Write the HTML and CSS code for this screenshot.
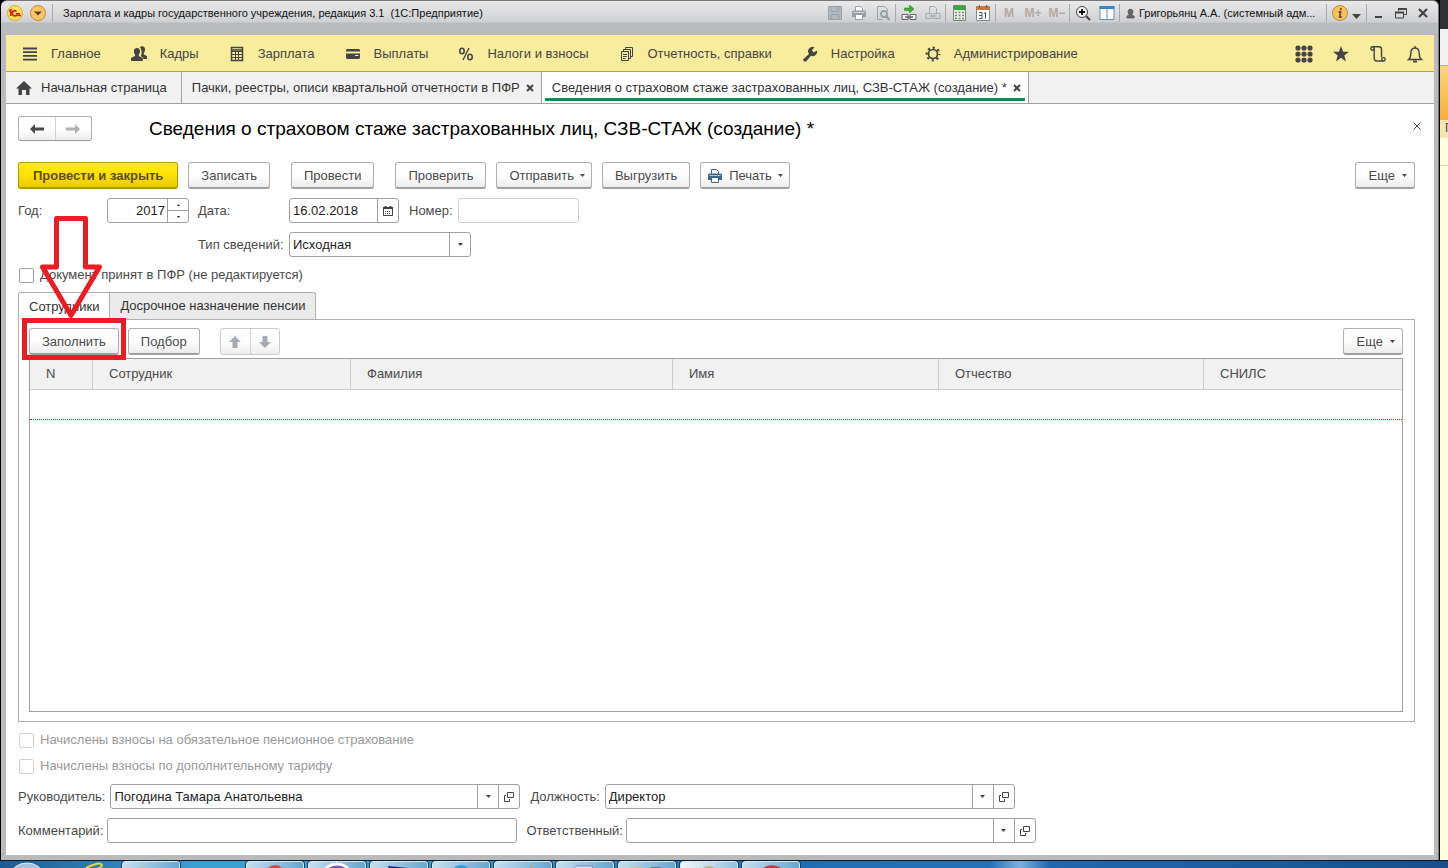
FILE: index.html
```html
<!DOCTYPE html>
<html lang="ru">
<head>
<meta charset="utf-8">
<title>Зарплата и кадры государственного учреждения, редакция 3.1</title>
<link rel="stylesheet" href="styles.css">
</head>
<body>
<svg class="defs" aria-hidden="true">
  <symbol id="i-print" viewBox="0 0 16 16"><path d="M4.500 6V1.500h5l2 2V6" fill="#fff" stroke="currentColor"/><path d="M2 5.500h12l1 1V12H1V6.500z" fill="currentColor"/><path d="M2.500 7.500h11" stroke="#fff" opacity=".6"/><path d="M4.500 9.500h7v5h-7z" fill="#fff" stroke="currentColor"/></symbol>
  <symbol id="i-down" viewBox="0 0 5 3"><path d="M0 0h5L2.500 3z" fill="currentColor"/></symbol>
  <symbol id="i-open" viewBox="0 0 10 10"><path d="M3.500.5h6v5h-6zM2 3.500H.5v6h5V7" fill="none" stroke="currentColor"/></symbol>
  <symbol id="i-arrow" viewBox="0 0 14 10"><path d="M0 5l5-5v3.500h9v3H5V10z" fill="currentColor"/></symbol>
  <symbol id="i-up" viewBox="0 0 12 12"><path d="M6 0l6 6H8.500v6h-5V6H0z" fill="currentColor"/></symbol>
</svg>
<div class="desktop">
<div class="window">
  <header class="titlebar">
    <div class="titlerow">
      <svg class="logo" viewBox="0 0 16 16"><circle cx="8" cy="8" r="7.500" fill="#ffe45c" stroke="#e0a92c"/><path d="M2 6.500l1.800-1.500v6M9.500 6.500a2.500 2.500 0 1 0-.5 4h5M9 8.700h4" fill="none" stroke="#d8201c" stroke-width="1.600"/></svg>
      <button class="round" aria-label="Меню"><svg viewBox="0 0 16 16"><circle cx="8" cy="8" r="7.500" fill="#fbc566" stroke="#c48a34"/><path d="M4 6.500h8L8 10.500z" fill="#5c4320"/></svg></button>
      <i class="sep"></i>
      <span class="apptitle">Зарплата и кадры государственного учреждения, редакция 3.1&nbsp; (1С:Предприятие)</span>
      <div class="tools">
        <button class="tool" aria-label="Сохранить"><svg viewBox="0 0 16 16" fill="none" stroke="#98a0a7"><path d="M1.500 1.500h13v13h-13z" fill="#b4bac0"/><path d="M4 2v4.500h8V2M4 14.500V9.500h8v5M10 3v2"/></svg></button>
        <button class="tool dim" aria-label="Печать"><svg><use href="#i-print"/></svg></button>
        <button class="tool" aria-label="Просмотр"><svg viewBox="0 0 16 16" fill="none" stroke="#98a0a7"><path d="M2.500 14.500v-13h7l3 3v2M2.500 14.500h5"/><circle cx="9" cy="9" r="3" stroke-width="2"/><path d="M11 11l3.500 4" stroke-width="2.500"/></svg></button>
        <i class="sep"></i>
        <button class="tool" aria-label="Ссылка"><svg viewBox="0 0 16 16" fill="none" stroke="#666"><path d="M1 9.500h6v5H1zM9 9.500h6v5H9z" fill="#eee"/><path d="M4 12h8" stroke-width="1.500"/><path d="M3.500 3h5V0L13 4 8.500 8V5.500h-5z" fill="#38b12d" stroke="#23871c" stroke-width=".5"/></svg></button>
        <button class="tool" aria-label="Печать ссылки"><svg viewBox="0 0 16 16" fill="none" stroke="#a4aab0"><path d="M4.500 8V1.500h5l2 2V8M1 8.500h6v5H1zM9 8.500h6v5H9zM4 11h8"/></svg></button>
        <i class="sep"></i>
        <button class="tool" aria-label="Калькулятор"><svg viewBox="0 0 16 16"><path d="M2.500.5h12v15h-12z" fill="#eef1ee" stroke="#7c857c"/><path d="M3 1h11v4H3z" fill="#35a83a"/><path d="M4 7.500h9M4 10.500h9M4 13.500h9" stroke="#6d8a70" stroke-width="1.500" stroke-dasharray="2 1.500"/></svg></button>
        <button class="tool" aria-label="Календарь"><svg viewBox="0 0 16 16"><path d="M1.500 1.500h13v14h-13z" fill="#fff" stroke="#858b92"/><path d="M1 1h14v4H1z" fill="#c87843"/><path d="M4.500 0v3M11.500 0v3" stroke="#875330"/><path d="M4 7.500h3v6M4 10.500h3M4 13.500h3M9 8.500l1.500-1v6" fill="none" stroke="#44556d"/></svg></button>
        <i class="sep"></i>
        <button class="tool mem">M</button><button class="tool mem">M+</button><button class="tool mem">M−</button>
        <i class="sep"></i>
        <button class="tool" aria-label="Масштаб"><svg viewBox="0 0 16 16" fill="none" stroke="#444"><circle cx="7" cy="7" r="5.500" fill="#f5f5f5"/><path d="M7 4v6M4 7h6" stroke="#111" stroke-width="1.800"/><path d="M11 11l4 4" stroke-width="2.200"/></svg></button>
        <button class="tool" aria-label="Панели"><svg viewBox="0 0 16 16"><path d="M1 1.500h14v13H1z" fill="#fff" stroke="#6f8ca8"/><path d="M.5 1h15v3H.5z" fill="#3b86c8"/><path d="M8 4v10" stroke="#6f8ca8"/></svg></button>
        <i class="sep"></i>
        <button class="user"><svg viewBox="0 0 10 12" fill="#6a6a6a" stroke="#444" stroke-width=".7"><path d="M1 11V9l2.500-2h3L9 9v2z"/><circle cx="5" cy="4" r="2.800"/></svg>Григорьянц А.А. (системный адм...</button>
        <i class="sep"></i>
        <button class="tool" aria-label="Справка"><svg viewBox="0 0 16 16"><circle cx="8" cy="8" r="7.500" fill="#f8c15c" stroke="#bd8b37"/><path d="M8.800 3v2.200M6.500 7h2l-.8 5h2" fill="none" stroke="#6c5330" stroke-width="1.800"/></svg></button>
        <svg class="caret" viewBox="0 0 9 5"><path d="M0 0h9L4.500 5z" fill="#444"/></svg>
        <i class="sep"></i>
        <button class="win" aria-label="Свернуть"><svg viewBox="0 0 12 12"><path d="M2 10h7" stroke="#444" stroke-width="2"/></svg></button>
        <button class="win" aria-label="Восстановить"><svg viewBox="0 0 12 12" fill="none" stroke="#444"><path d="M3.500 4V1.500h8v6H9"/><path d="M3 2h9M0 5.500h9" stroke-width="2"/><path d="M.5 5v6h8V5"/></svg></button>
        <button class="win" aria-label="Закрыть"><svg viewBox="0 0 12 12"><path d="M2 2l8 8M10 2l-8 8" stroke="#444" stroke-width="2.200"/></svg></button>
      </div>
    </div>
  </header>
  <nav class="menu">
    <a href="#"><svg viewBox="0 0 16 16" stroke="currentColor" stroke-width="1.800"><path d="M1 2.500h14M1 6.200h14M1 9.900h14M1 13.600h14"/></svg>Главное</a>
    <a href="#"><svg viewBox="0 0 16 16" fill="currentColor"><path d="M9 1a3 3 0 0 1 5 2.500c0 1.700-.5 2.500-1.200 3.300v1.400l3.200 2V13h-3.500C12 11 10.500 10.500 9.600 10c1.500-2 1.400-6-.6-8.500z"/><path d="M6 2c2 0 3 1.300 3 3.300 0 1.500-.5 2.500-1.200 3.200V10l4 2v3H0v-3l4-2V8.500C3.300 7.800 2.900 6.800 2.900 5.300 2.900 3.300 4 2 6 2z"/></svg>Кадры</a>
    <a href="#"><svg viewBox="0 0 16 16" fill="none" stroke="currentColor"><path d="M2.500 1.500h11v13h-11z" stroke-width="1.500"/><path d="M3 4h10" stroke-width="1.500"/><path d="M3 8.500h10M3 11.500h10M6.500 5v9M9.500 5v9M3 5.500h10"/></svg>Зарплата</a>
    <a href="#"><svg viewBox="0 0 16 16" fill="currentColor"><path d="M2 3h12l1 1v1.500H1V4zM1 7.500h14V12l-1 1H2l-1-1z"/><path d="M10 9.500h3.500" stroke="#faec9d"/></svg>Выплаты</a>
    <a href="#"><svg viewBox="0 0 16 16" fill="none" stroke="currentColor" stroke-width="1.600"><ellipse cx="4" cy="5" rx="2.200" ry="2.700"/><ellipse cx="12" cy="11" rx="2.200" ry="2.700"/><path d="M11 2L5 14" stroke-width="1.400"/></svg>Налоги и взносы</a>
    <a href="#"><svg viewBox="0 0 16 16" fill="none" stroke="currentColor"><path d="M2.500 5.500h7v9h-7zM4.500 5V3.500h7v9H10M6.500 3V1.500h7v9H12M4 8.500h4M4 10.500h4M4 12.500h2.500"/></svg>Отчетность, справки</a>
    <a href="#"><svg viewBox="0 0 16 16"><path d="M1 13.500L7 8a4.500 4.500 0 0 1 5.500-6.800L10 4l1.500 2.500 3.500-2A4.500 4.500 0 0 1 9 9.800L4 15.500H2z" fill="currentColor"/></svg>Настройка</a>
    <a href="#"><svg viewBox="0 0 16 16" fill="none" stroke="currentColor"><circle cx="8" cy="8" r="4.500" stroke-width="1.700"/><circle cx="8" cy="8" r="6.300" stroke-width="2.200" stroke-dasharray="2.200 2.748" stroke-dashoffset="1.100"/></svg>Администрирование</a>
    <div class="quick">
      <button aria-label="Разделы"><svg viewBox="0 0 18 18" fill="currentColor"><g id="dots"><circle cx="3" cy="3" r="2.600"/><circle cx="9" cy="3" r="2.600"/><circle cx="15" cy="3" r="2.600"/></g><use href="#dots" y="6"/><use href="#dots" y="12"/></svg></button>
      <button aria-label="Избранное"><svg viewBox="0 0 18 18"><path d="M9 1l2.100 5.800H17l-4.700 3.700L14 16.500l-5-3.700-5 3.700 1.700-6L1 6.800h5.900z" fill="currentColor"/></svg></button>
      <button aria-label="История"><svg viewBox="0 0 18 18" fill="none" stroke="currentColor" stroke-width="1.400"><circle cx="3.500" cy="3.500" r="1.700"/><path d="M3.500 1.800H10c1.700 0 2.500 1 2.500 2.500v8M5.200 3.500V13c0 2 1 3 2.500 3H14"/><circle cx="14.500" cy="14.300" r="1.700"/></svg></button>
      <button aria-label="Уведомления"><svg viewBox="0 0 18 18" fill="none" stroke="currentColor" stroke-width="1.400"><path d="M9 1v2M2.500 14.500c2-1.500 2.300-3 2.300-6C4.800 5 6.500 3 9 3s4.200 2 4.200 5.500c0 3 .3 4.500 2.300 6z"/><path d="M7 16.500h4" stroke-width="2"/></svg></button>
    </div>
  </nav>
  <div class="tabs">
    <a href="#" class="tab home"><svg viewBox="0 0 16 14"><path d="M8 0l8 7.500h-2.500V14H10V9H6v5H2.500V7.500H0z" fill="#444"/></svg>Начальная страница</a>
    <a href="#" class="tab">Пачки, реестры, описи квартальной отчетности в ПФР<svg class="x" viewBox="0 0 8 8"><path d="M1 1l6 6M7 1L1 7"/></svg></a>
    <a href="#" class="tab active">Сведения о страховом стаже застрахованных лиц, СЗВ-СТАЖ (создание) *<svg class="x" viewBox="0 0 8 8"><path d="M1 1l6 6M7 1L1 7"/></svg></a>
  </div>
  <main class="form">
    <div class="head">
      <div class="pair nav">
        <button aria-label="Назад"><svg><use href="#i-arrow"/></svg></button><button class="off" aria-label="Вперед"><svg class="flip"><use href="#i-arrow"/></svg></button>
      </div>
      <h1>Сведения о страховом стаже застрахованных лиц, СЗВ-СТАЖ (создание) *</h1>
      <button class="close" aria-label="Закрыть форму"><svg viewBox="0 0 8 8"><path d="M.5.5l7 7M7.500.5l-7 7" stroke="#444"/></svg></button>
    </div>
    <div class="bar commands">
      <button class="btn primary">Провести и закрыть</button>
      <button class="btn apart">Записать</button>
      <button class="btn apart">Провести</button>
      <button class="btn">Проверить</button>
      <button class="btn drop">Отправить<svg><use href="#i-down"/></svg></button>
      <button class="btn">Выгрузить</button>
      <button class="btn drop print"><svg class="pic"><use href="#i-print"/></svg>Печать<svg><use href="#i-down"/></svg></button>
      <button class="btn drop more">Еще<svg><use href="#i-down"/></svg></button>
    </div>
    <div class="fields">
      <label for="year" class="c1">Год:</label>
      <div class="field year"><input id="year" value="2017"><span class="spin"><button aria-label="Больше"><svg class="up"><use href="#i-down"/></svg></button><button aria-label="Меньше"><svg><use href="#i-down"/></svg></button></span></div>
      <label for="date">Дата:</label>
      <div class="line">
        <div class="field date"><input id="date" value="16.02.2018"><button aria-label="Выбрать дату"><svg class="cal" viewBox="0 0 10 10"><path d="M.5 1.500h9v8h-9z" fill="none" stroke="#444"/><path d="M0 2h10M2.500 0v2M7.500 0v2" stroke="#444" stroke-width="2"/><path d="M2 5.500h6M2 7.500h6" stroke="#444" stroke-dasharray="1 1"/></svg></button></div>
        <label for="num">Номер:</label>
        <div class="field num"><input id="num" disabled></div>
      </div>
      <label for="kind" class="c3">Тип сведений:</label>
      <div class="field kind"><select id="kind"><option>Исходная</option></select><span class="cell"><svg><use href="#i-down"/></svg></span></div>
    </div>
    <label class="check accepted"><input type="checkbox">Документ принят в ПФР (не редактируется)</label>
    <div class="pagetabs"><button class="on">Сотрудники</button><button>Досрочное назначение пенсии</button></div>
    <section class="page">
      <div class="bar inner">
        <span class="target"><button class="btn">Заполнить</button><svg class="pointer" viewBox="0 0 112 154"><path d="M38.500 8.500h29V57h14L53 105.500 24.500 57h14z" fill="none" stroke="#eb1c24" stroke-width="5" stroke-linejoin="round"/><path d="M6.500 110.500h99v37h-99z" fill="none" stroke="#eb1c24" stroke-width="5"/></svg></span>
        <button class="btn">Подбор</button>
        <div class="pair move"><button aria-label="Вверх"><svg><use href="#i-up"/></svg></button><button aria-label="Вниз"><svg class="turned"><use href="#i-up"/></svg></button></div>
        <button class="btn drop more">Еще<svg><use href="#i-down"/></svg></button>
      </div>
      <div class="grid">
        <table>
          <colgroup><col class="w-n"><col class="w-emp"><col class="w-last"><col class="w-first"><col class="w-mid"><col></colgroup>
          <thead><tr><th>N</th><th>Сотрудник</th><th>Фамилия</th><th>Имя</th><th>Отчество</th><th>СНИЛС</th></tr></thead>
          <tbody><tr><td colspan="6"></td></tr></tbody>
        </table>
      </div>
    </section>
    <label class="check muted first"><input type="checkbox" disabled>Начислены взносы на обязательное пенсионное страхование</label>
    <label class="check muted"><input type="checkbox" disabled>Начислены взносы по дополнительному тарифу</label>
    <div class="line people">
      <label for="boss">Руководитель:</label>
      <div class="field wide"><input id="boss" value="Погодина Тамара Анатольевна"><button aria-label="Список"><svg><use href="#i-down"/></svg></button><button aria-label="Открыть"><svg class="open"><use href="#i-open"/></svg></button></div>
      <label for="post">Должность:</label>
      <div class="field wide"><input id="post" value="Директор"><button aria-label="Список"><svg><use href="#i-down"/></svg></button><button aria-label="Открыть"><svg class="open"><use href="#i-open"/></svg></button></div>
    </div>
    <div class="line notes">
      <label for="note">Комментарий:</label>
      <div class="field wide"><input id="note"></div>
      <label for="resp">Ответственный:</label>
      <div class="field wide"><input id="resp"><button aria-label="Список"><svg><use href="#i-down"/></svg></button><button aria-label="Открыть"><svg class="open"><use href="#i-open"/></svg></button></div>
    </div>
  </main>
</div>
<aside class="behind"><i class="b1"></i><i class="b2"></i><i class="b3"></i><i class="b4">П</i><i class="b5"></i></aside>
</div>
<footer class="taskbar">
  <svg class="start" viewBox="0 0 118 8"><ellipse cx="27" cy="14" rx="16" ry="12" fill="#a9c3dc" stroke="#dcebf7"/><path d="M86 7q12-6 15-4t-4 5" fill="none" stroke="#f2d52c" stroke-width="2"/></svg>
  <span class="task"><svg viewBox="0 0 58 8"><path d="M16 5h6v3h-6z" fill="#c9c08a"/></svg></span>
  <span class="task split"><svg viewBox="0 0 58 8"><circle cx="29" cy="13" r="10" fill="#d9473c"/></svg></span>
  <span class="task"><svg viewBox="0 0 58 8"><ellipse cx="29" cy="11" rx="13" ry="9" fill="#7a55cf" stroke="#fff" stroke-width="3"/></svg></span>
  <span class="task"><svg viewBox="0 0 58 8"><path d="M17 4l22 2v2H20z" fill="#1b1f8c"/></svg></span>
  <span class="task"><svg viewBox="0 0 58 8"><circle cx="29" cy="14" r="11" fill="#29a0de"/></svg></span>
  <span class="task"><svg viewBox="0 0 58 8"><path d="M36 4l8 4h-8z" fill="#d89a58"/></svg></span>
  <span class="task"><svg viewBox="0 0 58 8"><path d="M16 8l4-4h17v4" fill="#dfe6fa" stroke="#7482c4"/></svg></span>
  <span class="task"><svg viewBox="0 0 58 8"><path d="M13 5h10v3H13z" fill="#d8c565"/><path d="M33 5h10v3H33z" fill="#5f7d75"/></svg></span>
  <span class="task pale"><svg viewBox="0 0 58 8"><circle cx="29" cy="15" r="10" fill="#efeec4" stroke="#c1b667" stroke-width="2"/></svg></span>
  <span class="task"><svg viewBox="0 0 58 8"><path d="M20 8q8-6 18-1" fill="none" stroke="#cf3645" stroke-width="3"/></svg></span>
</footer>
</body>
</html>
```
FILE: styles.css
```css
* { box-sizing: border-box; }
html, body { height: 100%; }
body {
  margin: 0;
  display: flex;
  flex-direction: column;
  overflow: hidden;
  font: 13px/16px "Liberation Sans", Arial, sans-serif;
  color: #4a4a4a;
  background: #000;
}
button, input, select { font: inherit; color: inherit; margin: 0; }
button { border: 0; padding: 0; background: none; white-space: nowrap; }
svg { display: block; flex: none; }
a { color: inherit; text-decoration: none; }
.defs { position: absolute; width: 0; height: 0; }

.desktop { flex: 1; min-height: 0; display: flex; gap: 1px; }
.window {
  flex: 1;
  min-width: 0;
  display: flex;
  flex-direction: column;
  margin-left: 1px;
  padding: 0 4px 5px 5px;
  border-top: 1px solid #7b777b;
  border-right: 1px solid #77777c;
  border-radius: 6px 6px 0 0;
  background: linear-gradient(#e9e9ea, #cfd0d2 21px, #b9babd 22px, #b9babb);
}

/* Title bar */
.titlebar { height: 34px; }
.titlerow { display: flex; align-items: center; height: 24px; font-size: 12px; color: #111; }
.logo { width: 16px; height: 16px; margin: 0 7px 0 1px; }
.round svg { width: 16px; height: 16px; }
.sep { flex: none; width: 1px; height: 18px; margin: 0 1px 0 0; background: #a9a9ac; }
.round + .sep { margin: 0 10px 0 6px; }
.apptitle { flex: 1; white-space: nowrap; font-size: 11px; }
.tools { display: flex; align-items: center; }
.tool { width: 24px; display: flex; justify-content: center; }
.tool svg { width: 16px; height: 16px; }
.tool.dim { color: #98a0a7; }
.tool.mem { display: block; font-size: 12px; font-weight: bold; color: #b3a7a0; }
.user { display: flex; align-items: center; gap: 4px; width: 205px; padding-left: 5px; font-size: 11px; }
.user svg { width: 9px; height: 11px; }
.caret { width: 9px; height: 5px; margin: 6px 5px 0 0; }
.win { width: 22px; display: flex; justify-content: center; }
.win svg { width: 12px; height: 12px; }

/* Section menu */
.menu {
  display: flex;
  align-items: center;
  gap: 30px;
  height: 37px;
  padding: 1px 10px 0 16px;
  background: #faec9d;
  border-bottom: 1px solid #b5a72c;
  color: #444;
}
.menu a { display: flex; align-items: center; gap: 13px; white-space: nowrap; }
.menu a svg { width: 16px; height: 16px; }
.quick { display: flex; gap: 19px; margin-left: auto; }
.quick svg { width: 18px; height: 18px; }

/* Open pages */
.tabs { display: flex; height: 32px; background: #f1f1f1; border-bottom: 1px solid #a0a0a0; color: #333; }
.tab { display: flex; align-items: center; gap: 6px; padding: 0 7px 0 10px; border-right: 1px solid #a0a0a0; white-space: nowrap; }
.tab.home { gap: 9px; padding-right: 14px; }
.home svg { width: 16px; height: 14px; }
.tab .x { width: 8px; height: 8px; stroke: #444; stroke-width: 2; }
.tab.active { background: linear-gradient(#218653, #218653) 3px 26px / calc(100% - 6px) 3px no-repeat #fff; }

/* Form */
.form { flex: 1; min-height: 0; display: flex; flex-direction: column; padding: 12px 19px 12px 12px; background: #fff; }
.head { display: flex; align-items: center; height: 25px; margin-bottom: 21px; }
.head h1 { flex: 1; margin: 0 0 0 57px; font-size: 19px; line-height: 24px; font-weight: normal; color: #000; white-space: nowrap; }
.close { align-self: flex-start; padding: 6px 0 0; margin-right: -6px; }
.close svg { width: 8px; height: 8px; }
.pair { display: flex; border: 1px solid #b0b0b0; border-bottom-color: #999; border-radius: 3px; background: linear-gradient(#fff 50%, #ededed); }
.pair button { display: flex; align-items: center; justify-content: center; }
.pair button + button { border-left: 1px solid #d0d0d0; }
.pair svg { width: 14px; height: 10px; }
.nav { width: 74px; height: 25px; }
.nav button { width: 37px; }
.nav .off { color: #b0b0b0; }
.flip { transform: scaleX(-1); }
.turned { transform: rotate(180deg); }
.move { height: 27px; margin-left: 11px; color: #a5abb1; border-color: #ccc; }
.move button { width: 29px; }
.move svg { width: 12px; height: 12px; }
.bar { display: flex; gap: 9px; }
.commands { gap: 10px; }
.btn {
  height: 27px;
  padding: 1px 12px 0;
  border: 1px solid #b0b0b0;
  border-bottom: 2px solid #a0a0a0;
  border-radius: 3px;
  background: linear-gradient(#fff 50%, #ececec);
}
.primary { padding: 1px 14px 0; background: linear-gradient(#ffe924, #fee000 50%, #ecca00); border-color: #b09b00; font-weight: bold; color: #5c4e10; }
.apart { margin-right: 11px; }
.drop { display: flex; align-items: center; gap: 6px; padding-right: 6px; }
.btn svg, .cell svg, .field button svg { width: 5px; height: 3px; }
.print { padding-left: 6px; }
.btn .pic { width: 16px; height: 16px; color: #3e648e; }
.more { margin-left: auto; gap: 7px; padding-left: 13px; padding-right: 7px; }

.fields { display: grid; grid-template-columns: 80px 82px 82px auto; column-gap: 9px; row-gap: 9px; align-items: center; justify-content: start; margin-top: 9px; white-space: nowrap; }
.c3 { grid-column: 3; }
.line { display: flex; align-items: center; gap: 10px; white-space: nowrap; }
.field { display: flex; height: 25px; border: 1px solid #a0a0a0; border-radius: 3px; background: #fff; color: #222; overflow: hidden; }
.field input, .field select { flex: 1; min-width: 0; width: 0; height: 100%; border: 0; padding: 0 3px; background: none; appearance: none; outline: 0; }
.field > button, .cell { flex: none; width: 21px; display: flex; align-items: center; justify-content: center; border-left: 1px solid #a0a0a0; color: #444; }
.year { width: 82px; }
.year input { text-align: right; padding-right: 2px; }
.spin { width: 21px; display: flex; flex-direction: column; border-left: 1px solid #a0a0a0; }
.spin button { flex: 1; display: flex; align-items: center; justify-content: center; }
.spin button + button { border-top: 1px solid #a0a0a0; }
.field .spin svg { width: 3px; height: 2px; }
.up { transform: scaleY(-1); }
.date { width: 110px; }
.field .cal { width: 10px; height: 10px; }
.num { width: 121px; border-color: #d0d0d0; }
.line label + .field { margin-left: -5px; }
.line.notes label + .field { margin-left: -7px; }
.kind { width: 182px; }
.wide { width: 410px; }
.field .open { width: 10px; height: 10px; }

.check { display: flex; align-items: center; gap: 6px; height: 16px; }
.check input { appearance: none; width: 15px; height: 15px; margin: 0 0 0 1px; border: 1px solid #a0a0a0; border-radius: 2px; background: #fff; }
.accepted { margin: 10px 0 9px; }
.muted { color: #999; margin-bottom: 10px; }
.muted.first { margin-top: 10px; }
.muted input { border-color: #d0d0d0; }

.pagetabs { display: flex; height: 27px; }
.pagetabs button { padding: 0 10px; border: 1px solid #b0b0b0; border-bottom: 0; border-left: 0; background: #ebebeb; color: #333; border-radius: 0 3px 0 0; }
.pagetabs .on { height: 28px; z-index: 1; border-left: 1px solid #b0b0b0; border-radius: 3px 0 0 0; background: #fff; }
.page { flex: 1; min-height: 0; display: flex; flex-direction: column; padding: 8px 11px 9px 10px; border: 1px solid #b0b0b0; }
.inner { margin-bottom: 3px; }
.target { position: relative; }
.pointer { position: absolute; left: -11px; top: -118px; z-index: 2; pointer-events: none; }
.target .pointer { width: 112px; height: 154px; }
.grid { flex: 1; min-height: 0; border: 1px solid #a0a0a0; }
.grid table { width: 100%; table-layout: fixed; border-collapse: separate; border-spacing: 0; }
.grid th { height: 31px; padding: 0 16px; text-align: left; font-weight: normal; background: #f1f1f1; border-right: 1px solid #ccc; border-bottom: 1px solid #ccc; }
.grid th:last-child { border-right: 0; }
.grid td { height: 30px; padding: 0; border-bottom: 1px dotted #a82020; }
.w-n { width: 63px; }
.w-emp { width: 258px; }
.w-last { width: 322px; }
.w-first { width: 266px; }
.w-mid { width: 265px; }
.people { margin: 0 0 9px; }

/* Window underneath, at the right edge */
.behind { flex: none; width: 8px; display: flex; flex-direction: column; overflow: hidden; background: #ffffdf; }
.b1 { height: 29px; background: #303336; }
.b2 { height: 37px; background: #f2f2f2; border-bottom: 1px solid #b0b0b0; }
.b3 { height: 54px; background: linear-gradient(#fbd878, #f9ae35); }
.b4 { height: 18px; padding-left: 5px; background: #f9e7b0; font-style: normal; font-size: 12px; }
.b5 { height: 28px; border-bottom: 1px solid #f0d890; }

/* Taskbar */
.taskbar {
  flex: none;
  display: flex;
  gap: 4px;
  height: 8px;
  overflow: hidden;
  border-top: 1px solid #0a1a2a;
  background: linear-gradient(90deg, #1d5c92, #3c9fd2 200px, #3c9fd2 400px, #1f6db3 800px, #2471b8 990px, #7fb0dd 1020px, #2068ae 1050px, #174f8c);
}
.start { width: 118px; height: 8px; }
.task { flex: none; width: 58px; border: 1px solid #d5eaf7; border-bottom: 0; border-radius: 3px 3px 0 0; outline: 1px solid #173f60; background: linear-gradient(120deg, #c8e0f0, #62a5d0); }
.task.pale { background: linear-gradient(120deg, #f4f9fc, #8fc0de); }
.task svg { width: 56px; height: 8px; }
.split { margin-left: 62px; }
```
